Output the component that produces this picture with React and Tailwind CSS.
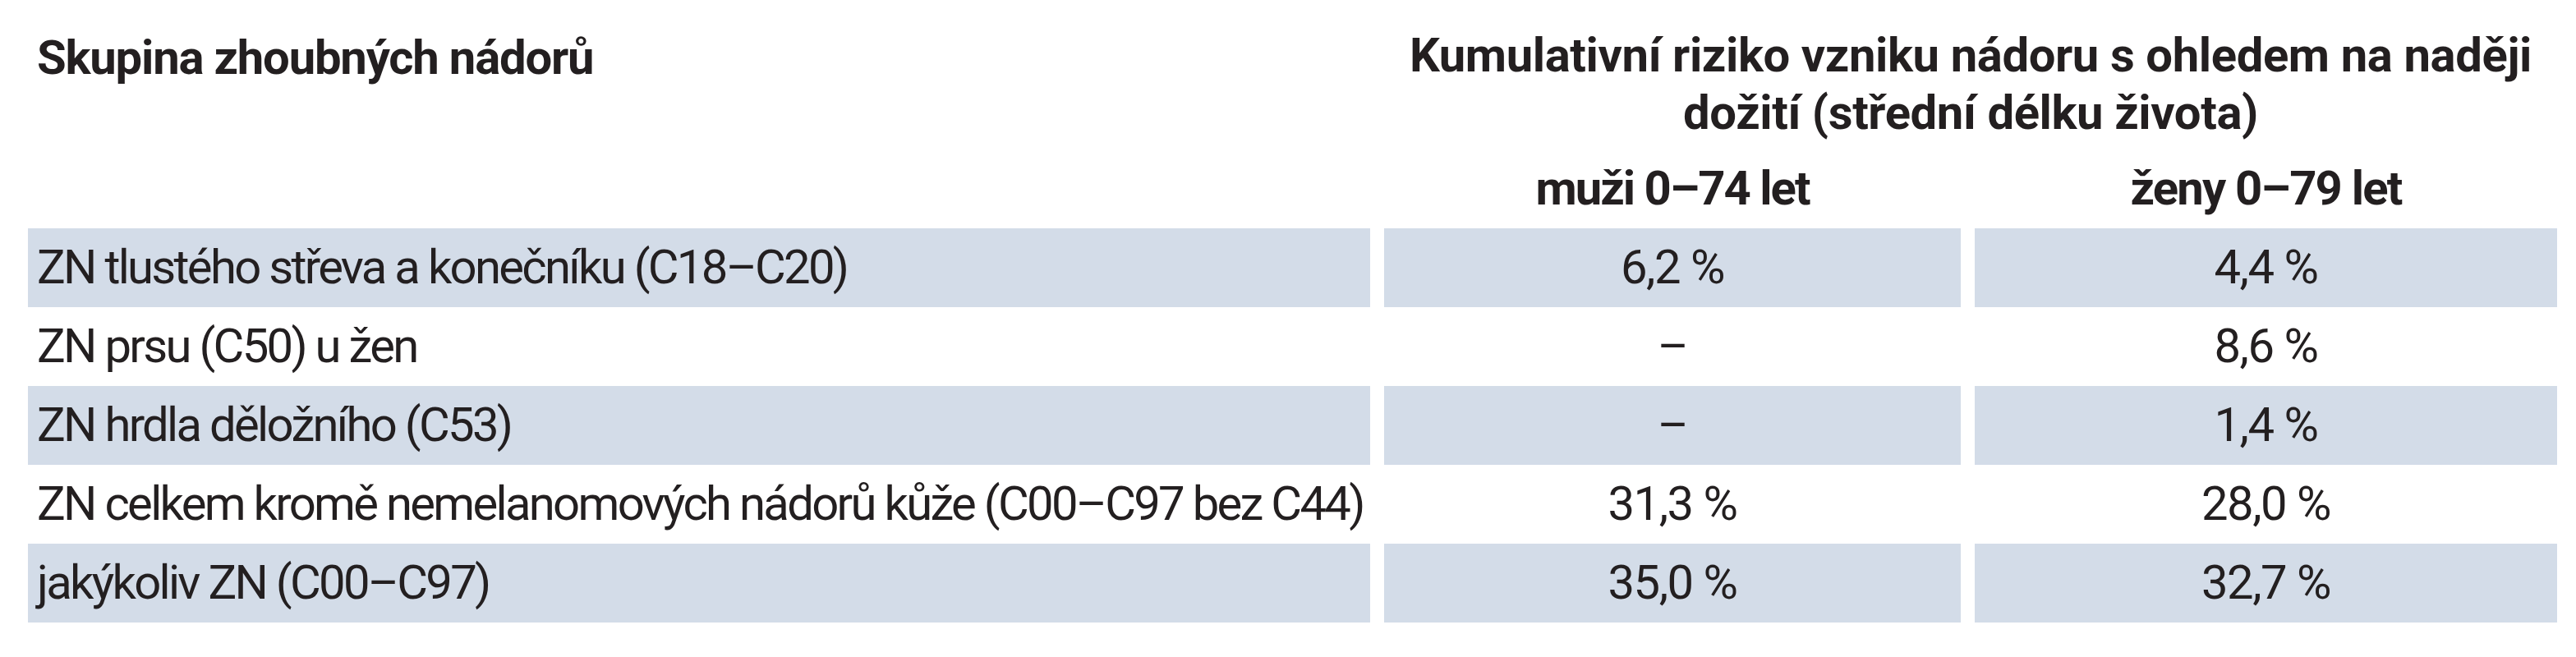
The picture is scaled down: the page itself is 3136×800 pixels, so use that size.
import React from "react";

const rows = [
  { label: "ZN tlustého střeva a konečníku (C18–C20)", m: "6,2 %", z: "4,4 %", shade: true },
  { label: "ZN prsu (C50) u žen", m: "–", z: "8,6 %", shade: false },
  { label: "ZN hrdla děložního (C53)", m: "–", z: "1,4 %", shade: true },
  { label: "ZN celkem kromě nemelanomových nádorů kůže (C00–C97 bez C44)", m: "31,3 %", z: "28,0 %", shade: false },
  { label: "jakýkoliv ZN (C00–C97)", m: "35,0 %", z: "32,7 %", shade: true },
];

export default function App() {
  return (
    <div
      className="w-[3136px] h-[800px] bg-white text-[#231f20] pl-[34px] pr-[23px]"
      style={{ fontFamily: "Roboto, 'Open Sans', sans-serif" }}
    >
      <div className="grid grid-cols-[1634px_702px_709px] gap-x-[17px] text-[58px] leading-[70px]">
        {/* header */}
        <div className="row-span-2 pl-[11px] pt-[35px] font-bold tracking-[-1.2px] whitespace-nowrap">
          Skupina zhoubných nádorů
        </div>
        <div className="col-span-2 pt-[32px] font-bold tracking-[-0.4px] text-center">
          Kumulativní riziko vzniku nádoru s ohledem na naději
          <br />
          dožití (střední délku života)
        </div>
        <div className="pt-[22px] pb-[14px] font-bold tracking-[-2px] text-center whitespace-nowrap">muži 0–74 let</div>
        <div className="pt-[22px] pb-[14px] font-bold tracking-[-1.8px] text-center whitespace-nowrap">ženy 0–79 let</div>

        {/* body */}
        {rows.map((r, i) => (
          <React.Fragment key={i}>
            <div
              className={`h-[96px] flex items-center pl-[11px] pb-[3px] tracking-[-2.7px] whitespace-nowrap ${r.shade ? "bg-[#d3dce8]" : ""}`}
            >
              {r.label}
            </div>
            <div
              className={`h-[96px] flex items-center justify-center pb-[3px] tracking-[-1.5px] whitespace-nowrap ${r.shade ? "bg-[#d3dce8]" : ""}`}
            >
              {r.m}
            </div>
            <div
              className={`h-[96px] flex items-center justify-center pb-[3px] tracking-[-1.5px] whitespace-nowrap ${r.shade ? "bg-[#d3dce8]" : ""}`}
            >
              {r.z}
            </div>
          </React.Fragment>
        ))}
      </div>
    </div>
  );
}
